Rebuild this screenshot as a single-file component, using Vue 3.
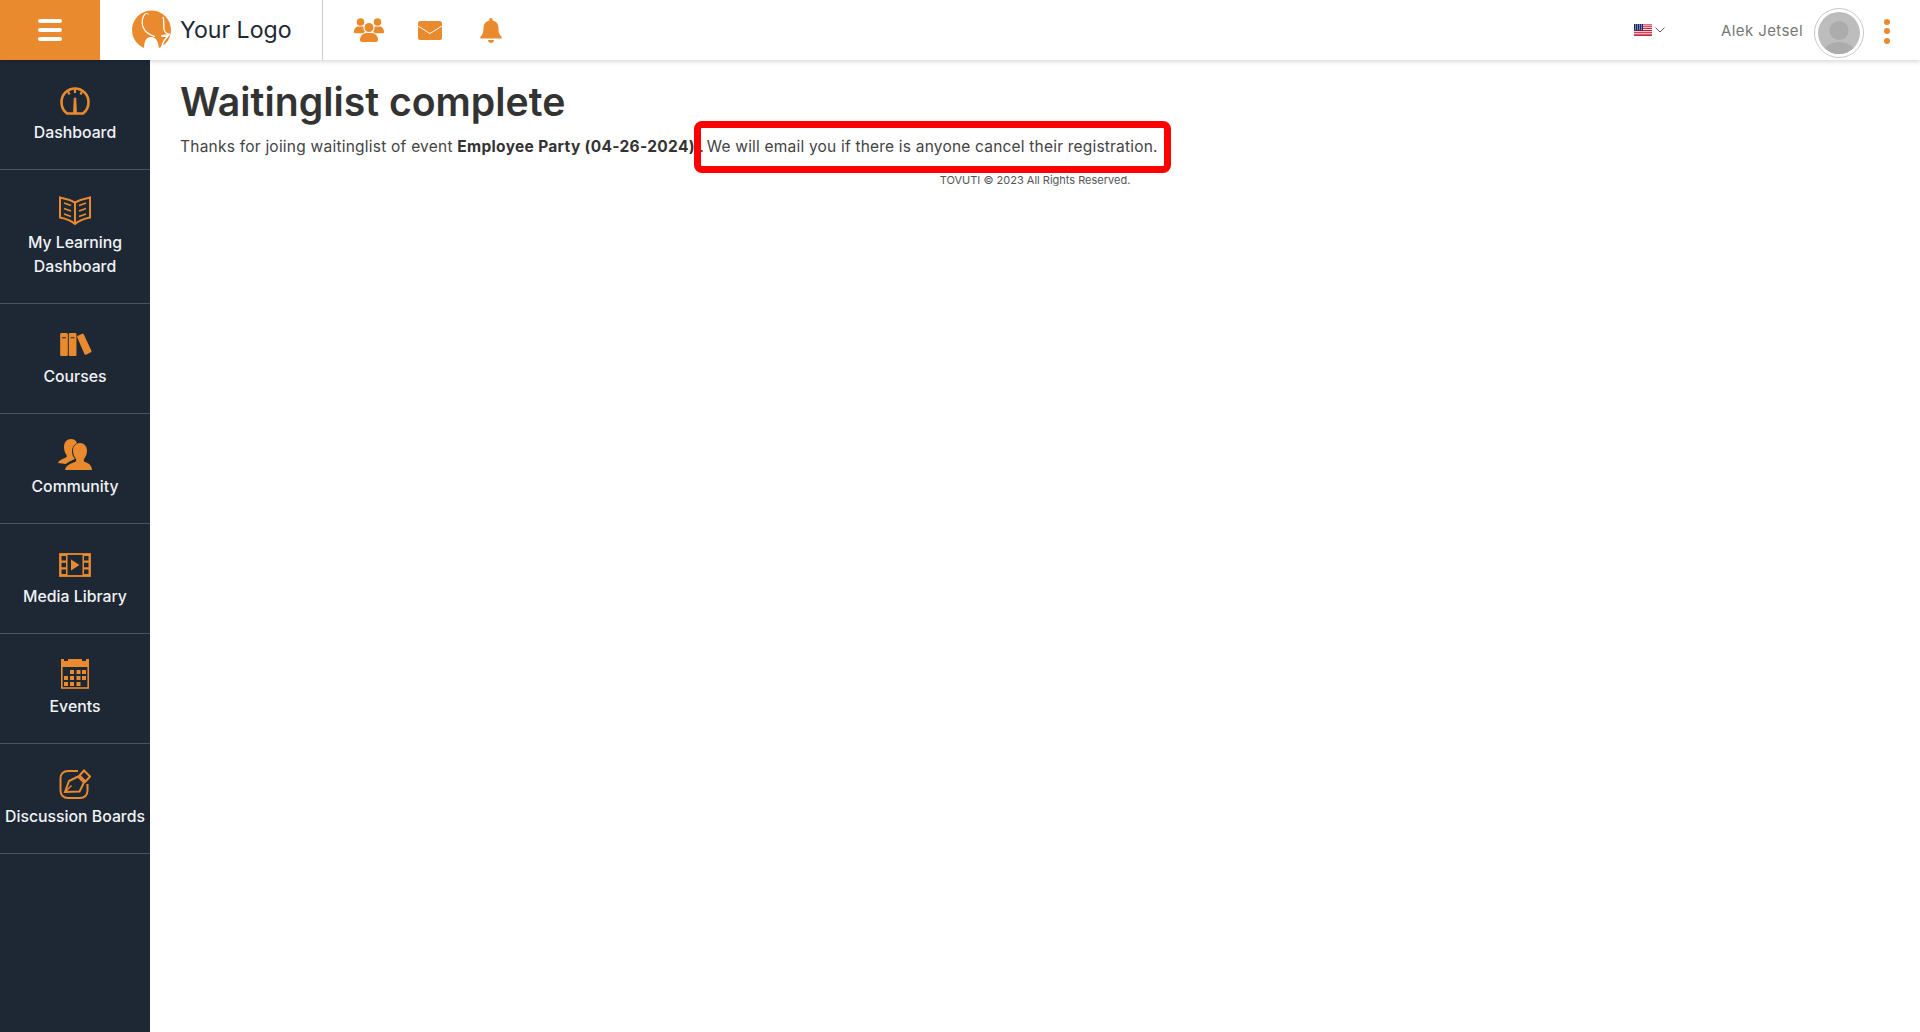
<template>
  <div class="page">
    <header class="topbar">
      <button class="menu-btn" aria-label="Menu">
        <span></span><span></span><span></span>
      </button>
      <div class="logo">
        <svg class="logo-mark" viewBox="0 0 40 40" width="40" height="40">
          <circle cx="19.500" cy="20" r="19.500" fill="#ea8a2f" />
          <path d="M13 4c-3 3-3.500 9-2 13 2 5 6 8 12 9.500" fill="none" stroke="#fff" stroke-width="1.200" />
          <path d="M13 4c1.500-1 3-.5 3.500.5" fill="none" stroke="#fff" stroke-width="1" />
          <path d="M31 7c1.500 4 .5 9 1 12.500.3 2 2 4 6 5-3 .5-6 .5-9 1.500" fill="none" stroke="#fff" stroke-width="1.300" />
          <path d="M30 26c2 1 3.500 0 6 0-1.500 2-3 3-4 5-1 1.500-1.500 4-2.500 6" fill="none" stroke="#fff" stroke-width="1.400" />
          <path d="M12 40c0-8 1.500-13 7-13s7.500 5 8 13z" fill="#fff" />
        </svg>
        <span class="logo-text">Your Logo</span>
      </div>
      <nav class="quick-icons">
        <a class="quick-icon">
          <svg viewBox="0 0 30 24" width="30" height="24" fill="#ea8a2f">
            <circle cx="6.500" cy="4" r="3.800" />
            <circle cx="23.500" cy="4" r="3.800" />
            <circle cx="15" cy="9.500" r="4.500" />
            <path d="M0 14c0-3.500 2-5.500 5-5.500h3c.5 0 1 .1 1.500.3-.3 1.900.3 3.800 1.500 5.200-.8.3-1.500.7-2.200 1.300H1.200C.5 15.300 0 14.800 0 14z" />
            <path d="M30 14c0-3.500-2-5.500-5-5.500h-3c-.5 0-1 .1-1.500.3.3 1.900-.3 3.800-1.500 5.200.8.3 1.500.7 2.200 1.300h7.600c.7 0 1.200-.5 1.200-1.300z" />
            <path d="M6 22c0-4 3-7 6-7h6c3 0 6 3 6 7 0 1-.6 2-2 2H8c-1.400 0-2-1-2-2z" />
          </svg>
        </a>
        <a class="quick-icon">
          <svg viewBox="0 0 24 19" width="24" height="19">
            <rect width="24" height="19" rx="2.500" fill="#ea8a2f" />
            <path d="M0 5l12 7.500L24 5" fill="none" stroke="#fff" stroke-width="1" />
          </svg>
        </a>
        <a class="quick-icon">
          <svg viewBox="0 0 22 25" width="22" height="25" fill="#ea8a2f">
            <path d="M11 0c1 0 1.700.8 1.700 1.800v.7c3.800.8 5.800 3.900 5.800 7.500 0 5 1.200 6.800 3 8.700.6.700.2 1.800-.8 1.800H1.300c-1 0-1.400-1.100-.8-1.800 1.800-1.900 3-3.700 3-8.700 0-3.600 2-6.700 5.800-7.500v-.7C9.300.8 10 0 11 0z" />
            <path d="M8 22h6c0 1.600-1.300 3-3 3s-3-1.400-3-3z" />
          </svg>
        </a>
      </nav>
      <div class="user-area">
        <div class="lang">
          <svg class="flag" viewBox="0 0 18 12" width="18" height="12">
            <rect width="18" height="12" fill="#fff" />
            <path d="M0 .9h18M0 2.800h18M0 4.600h18M0 6.500h18M0 8.300h18M0 10.200h18M0 11.600h18" stroke="#c8102e" stroke-width="1" />
            <rect width="9" height="6.500" fill="#1f2a6b" />
            <path d="M1 1h7M1 3h7M1 5h7" stroke="#fff" stroke-width=".8" stroke-dasharray="1 1" />
          </svg>
          <svg viewBox="0 0 10 6" width="10" height="6">
            <path d="M.5.700L5 5l4.500-4.300" fill="none" stroke="#555" stroke-width="1" />
          </svg>
        </div>
        <span class="user-name">Alek Jetsel</span>
        <div class="avatar">
          <svg viewBox="0 0 42 42" width="42" height="42">
            <defs>
              <clipPath id="avatar-clip"><circle cx="21" cy="21" r="21" /></clipPath>
            </defs>
            <circle cx="21" cy="21" r="21" fill="#bdbdbd" />
            <g clip-path="url(#avatar-clip)" fill="#acacac">
              <circle cx="21" cy="18.500" r="9.500" />
              <ellipse cx="21" cy="43" rx="17" ry="13" />
            </g>
          </svg>
        </div>
        <div class="dots"><i></i><i></i><i></i></div>
      </div>
    </header>

    <div class="body">
      <aside class="sidebar">
        <a v-for="item in menu" :key="item.label" class="side-item" :class="{ tall: item.tall }">
          <span class="side-icon" v-html="item.icon"></span>
          <span class="side-label">{{ item.label }}</span>
        </a>
      </aside>
      <main class="content">
        <h1>Waitinglist complete</h1>
        <p class="message">
          Thanks for joiing waitinglist of event <strong>Employee Party (04-26-2024)</strong> .
          <span class="marked">We will email you if there is anyone cancel their registration.</span>
        </p>
        <div class="copyright">TOVUTI © 2023 All Rights Reserved.</div>
      </main>
    </div>
  </div>
</template>

<script setup>
const c = '#ea8a2f'
const bg = '#1e2835'
const menu = [
  {
    label: 'Dashboard',
    icon: `<svg viewBox="0 0 30 28" width="30" height="28" fill="none" stroke="${c}" stroke-width="2.600"><path d="M7 26.500C3.500 24 1.500 20 1.500 15a13.500 13.500 0 0 1 27 0c0 5-2 9-5.500 11.500z"/><path d="M15 2v4M8 4.500l1.500 3M22 4.500l-1.500 3" stroke-width="2.200"/><path d="M13.500 26l.7-15h1.600l.7 15z" fill="${c}" stroke-width=".8"/></svg>`,
  },
  {
    label: 'My Learning Dashboard',
    tall: true,
    icon: `<svg viewBox="0 0 32 30" width="32" height="30" fill="none" stroke="${c}" stroke-width="2"><path d="M16 6.500C12 4.500 6 2.500 1 1.500v20c5 1 11 3 15 6.500 4-3.500 10-5.500 15-6.500v-20c-5 1-11 3-15 5zM16 6.500V28"/><path d="M5 8l7 2.500M5 13.500l7 2.500M5 19l7 2.500M27 8l-7 2.500M27 13.500L20 16M27 19l-7 2.500" stroke-width="1.800" transform="translate(0 -1)"/></svg>`,
  },
  {
    label: 'Courses',
    icon: `<svg viewBox="0 0 34 24" width="33" height="23"><path fill="${c}" d="M1 1.500C1 .7 1.500 0 2.300 0h5.400C8.500 0 9 .7 9 1.500v21.200c0 .7-.5 1.300-1.300 1.300H2.300C1.500 24 1 23.400 1 22.700z"/><path fill="${c}" d="M10 1.500C10 .7 10.500 0 11.300 0h5.400c.8 0 1.300.7 1.300 1.500v21.200c0 .7-.5 1.300-1.300 1.300h-5.400c-.8 0-1.300-.6-1.300-1.300z"/><path fill="${c}" d="M18.700 4.500c-.3-.7 0-1.400.7-1.700l4.500-2c.7-.3 1.400 0 1.700.6l8 17c.3.700 0 1.400-.6 1.700l-5 2.500c-.6.300-1.400 0-1.700-.6z"/><path d="M3 5h4M12 5h4" stroke="${bg}" stroke-width="1.200"/></svg>`,
  },
  {
    label: 'Community',
    icon: `<svg viewBox="0 0 34 31" width="34" height="31" fill="${c}"><path d="M0 24c1-3 5-4 8-5.500 1-.5 1-1.500.5-2.500C7 14 6 11 6 8c0-5 3-8 7-8 3 0 5 1.500 6 4-3 1.500-5 4.500-5 8 0 3 1 6 3 8-3 1.500-7 2.500-9 5z"/><path d="M7 31c1-5 6-6.500 10-8 1.500-.6 1.500-2 .8-3.300-1.500-2-2.800-5-2.800-8 0-4.500 3-7.700 7-7.700s7 3.200 7 7.700c0 3-1.300 6-2.800 8-.7 1.300-.7 2.700.8 3.300 4 1.500 6.500 3 7 8z"/></svg>`,
  },
  {
    label: 'Media Library',
    icon: `<svg viewBox="0 0 32 24" width="32" height="24"><rect x="1" y="1" width="30" height="22" fill="none" stroke="${c}" stroke-width="1.800"/><path fill="${c}" d="M1 1h7.500v22H1zM23.500 1H31v22h-7.500z"/><path fill="${bg}" d="M2.500 3h4.500v4.500H2.500zM2.500 9.800h4.500v4.500H2.500zM2.500 16.500h4.500V21H2.500zM25 3h4.500v4.500H25zM25 9.800h4.500v4.500H25zM25 16.500h4.500V21H25z"/><path d="M12 6.500l8.500 5.500-8.500 5.500z" fill="${c}"/></svg>`,
  },
  {
    label: 'Events',
    icon: `<svg viewBox="0 1 30 31" width="30" height="31"><path fill="${c}" d="M1 1h3v2h4V1h14v2h4V1h3v8H1z"/><rect x="1.800" y="7" width="26.400" height="23" fill="none" stroke="${c}" stroke-width="1.600"/><path fill="${c}" d="M10 12h4v4h-4zM16.500 12h4v4h-4zM22 12h4v4h-4zM4 18h4v4H4zM10 18h4v4h-4zM16.500 18h4v4h-4zM22 18h4v4h-4zM4 24h4v4H4zM10 24h4v4h-4zM16.500 24h4v4h-4z"/></svg>`,
  },
  {
    label: 'Discussion Boards',
    icon: `<svg viewBox="0 0 32 31" width="32" height="31" fill="none" stroke="${c}" stroke-width="2"><path d="M19 2H9C4.500 2 1.500 5 1.500 9.500v12C1.500 26 4.500 29 9 29h12c4.500 0 7.500-3 7.500-7.500V15"/><path d="M6 23l4-11 9-4.500 6 6-4.500 9z" stroke-width="2"/><path d="M6 23l6.500-6.500" stroke-width="1.500"/><path d="M25 1.500l6 6-4.500 5-6-6z" fill="${bg}" stroke-width="2"/></svg>`,
  },
]
</script>

<style>
html,
body {
  margin: 0;
  background: #fff;
}
</style>

<style scoped>
.page {
  height: 1032px;
  display: flex;
  flex-direction: column;
  font-family: Inter, "Liberation Sans", sans-serif;
  overflow: hidden;
}

.topbar {
  height: 60px;
  display: flex;
  align-items: center;
  background: #fff;
  box-shadow: 0 1px 5px rgba(0, 0, 0, 0.2);
  position: relative;
  z-index: 2;
  flex-shrink: 0;
}

.menu-btn {
  width: 100px;
  height: 60px;
  background: #ea8a2f;
  border: 0;
  padding: 0;
  display: flex;
  flex-direction: column;
  align-items: center;
  justify-content: center;
  gap: 5px;
}

.menu-btn span {
  width: 24px;
  height: 4px;
  border-radius: 2px;
  background: #fff;
}

.logo {
  width: 223px;
  height: 60px;
  box-sizing: border-box;
  border-right: 1px solid #cfcfcf;
  display: flex;
  align-items: center;
  padding-left: 32px;
  gap: 8px;
}

.logo-mark {
  flex-shrink: 0;
}

.logo-text {
  font-size: 23.100px;
  color: #1e2835;
}

.quick-icons {
  display: flex;
  align-items: center;
  padding-left: 15px;
}

.quick-icon {
  width: 61px;
  display: flex;
  justify-content: center;
}

.user-area {
  margin-left: auto;
  display: flex;
  align-items: center;
  height: 60px;
}

.lang {
  display: flex;
  align-items: center;
  gap: 3px;
  margin-right: 56px;
}

.user-name {
  font-size: 15px;
  color: #777;
  letter-spacing: 0.4px;
}

.avatar {
  width: 50px;
  height: 50px;
  box-sizing: border-box;
  margin-left: 11px;
  margin-top: 6px;
  border: 1px solid #c9c9c9;
  border-radius: 50%;
  display: flex;
  align-items: center;
  justify-content: center;
}

.dots {
  width: 46px;
  margin-right: 10px;
  display: flex;
  flex-direction: column;
  align-items: center;
  gap: 3.500px;
  margin-top: 2px;
}

.dots i {
  width: 6px;
  height: 6px;
  border-radius: 50%;
  background: #ea8a2f;
}

.body {
  flex: 1;
  display: flex;
  min-height: 0;
}

.sidebar {
  width: 150px;
  background: #1e2835;
  flex-shrink: 0;
}

.side-item {
  height: 110px;
  box-sizing: border-box;
  padding-top: 25px;
  border-bottom: 1px solid #4a535e;
  display: flex;
  flex-direction: column;
  align-items: center;
  text-align: center;
}

.side-item.tall {
  height: 134px;
}

.side-icon {
  height: 31px;
  display: flex;
  align-items: center;
  justify-content: center;
}

.side-icon :deep(svg) {
  display: block;
}

.side-label {
  margin-top: 5px;
  font-size: 15.800px;
  line-height: 23.500px;
  font-weight: 500;
  color: #f1f3f5;
}

.content {
  flex: 1;
  padding: 19px 30px 0;
  color: #333;
}

h1 {
  margin: 0;
  font-size: 39.200px;
  line-height: 46px;
  font-weight: 600;
  color: #333;
}

.message {
  margin: 11px 0 0;
  font-size: 15.500px;
  line-height: 22px;
  letter-spacing: 0.23px;
  color: #444;
  white-space: nowrap;
}

.message strong {
  font-weight: 700;
  color: #333;
  letter-spacing: 0.32px;
}

.marked {
  position: relative;
  margin-left: -2px;
  letter-spacing: 0.2px;
}

.marked::after {
  content: "";
  position: absolute;
  left: -13px;
  right: -13px;
  top: -16px;
  bottom: -17px;
  border: 7px solid #f00;
  border-radius: 8px;
  box-sizing: border-box;
}

.copyright {
  margin: 15px -30px 0;
  font-size: 11px;
  line-height: 14px;
  color: #555;
  text-align: center;
}
</style>
